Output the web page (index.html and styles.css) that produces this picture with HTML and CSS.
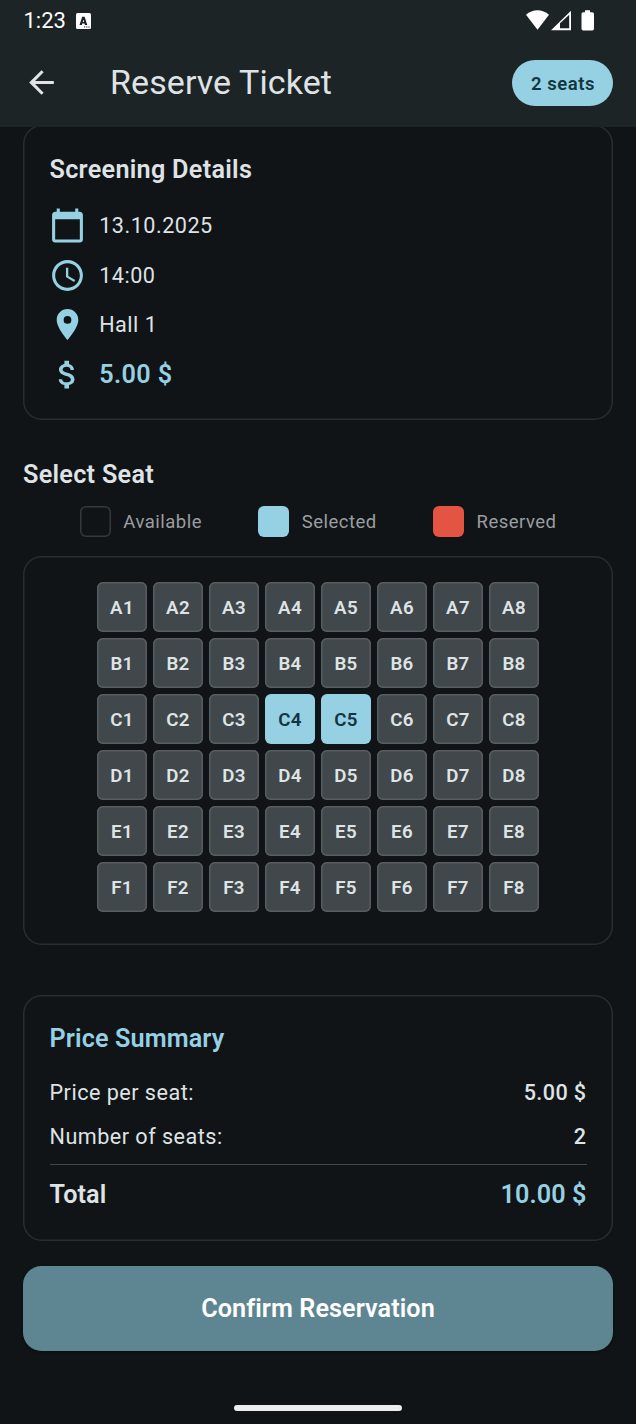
FILE: index.html
```html
<!DOCTYPE html>
<html lang="en">
<head>
<meta charset="utf-8">
<title>Reserve Ticket</title>
<link rel="stylesheet" href="styles.css">
</head>
<body>
<div class="screen">
  <header class="top">
    <div class="status">
      <span class="clock">1:23</span>
      <svg class="lang" width="15" height="16" viewBox="0 0 15 16"><rect width="15" height="16" rx="1.500" fill="#fff"/><path d="M3.500 12 6.200 3.800h2.400L11.300 12H8.900L8.500 10.600H6.200L5.800 12ZM6.700 8.900h1.400L7.400 6.400Z" fill="#1b2325" fill-rule="evenodd"/><path d="M8 14h1.200M10.200 14h1.200M12.400 14h1.200" stroke="#1b2325" stroke-width="1.200"/></svg>
      <svg class="signals" width="70" height="22" viewBox="0 0 70 22"><path d="M0 4.800C6.500-1.300 16.500-1.300 23 4.800L11.500 19.800Z" fill="#fff"/><path d="M25 20.200 45 .8V20.200Z" fill="#fff"/><path d="M34 18.200V13.200L43.200 4.700V18.200Z" fill="#1b2325"/><path d="M59 .2h5v2h2.200q1.800 0 1.800 1.800v14.700q0 1.800-1.800 1.800h-8.900q-1.800 0-1.800-1.800V4q0-1.800 1.800-1.800H59Z" fill="#fff"/></svg>
    </div>
    <div class="appbar">
      <svg class="back" width="37" height="37" viewBox="0 0 24 24"><path d="M20 11H7.830l5.590-5.590L12 4l-8 8 8 8 1.410-1.410L7.830 13H20v-2z" fill="#dfe3e5"/></svg>
      <h1 class="title">Reserve Ticket</h1>
      <span class="chip">2 seats</span>
    </div>
  </header>
  <main class="content">
    <section class="card details">
      <h2 class="heading">Screening Details</h2>
      <div class="info"><svg class="icon" viewBox="0 0 24 24"><path d="M20 3h-1V1h-2v2H7V1H5v2H4c-1.100 0-2 .9-2 2v16c0 1.100.9 2 2 2h16c1.100 0 2-.9 2-2V5c0-1.100-.9-2-2-2zm0 18H4V8h16v13z"/></svg><span>13.10.2025</span></div>
      <div class="info"><svg class="icon" viewBox="0 0 24 24"><path d="M11.990 2C6.470 2 2 6.480 2 12s4.470 10 9.990 10C17.520 22 22 17.520 22 12S17.520 2 11.990 2zM12 20c-4.420 0-8-3.580-8-8s3.580-8 8-8 8 3.580 8 8-3.580 8-8 8zm.5-13H11v6l5.250 3.150.75-1.230-4.500-2.670z"/></svg><span>14:00</span></div>
      <div class="info"><svg class="icon" viewBox="0 0 24 24"><path d="M12 2C8.130 2 5 5.130 5 9c0 5.250 7 13 7 13s7-7.750 7-13c0-3.870-3.130-7-7-7zm0 9.500a2.500 2.500 0 0 1 0-5 2.500 2.500 0 0 1 0 5z"/></svg><span>Hall 1</span></div>
      <div class="info"><svg class="icon" viewBox="0 0 24 24"><path d="M11.800 10.900c-2.270-.59-3-1.200-3-2.150 0-1.090 1.010-1.850 2.700-1.850 1.780 0 2.440.85 2.500 2.100h2.210c-.07-1.720-1.120-3.300-3.210-3.810V3h-3v2.160c-1.940.42-3.500 1.680-3.500 3.610 0 2.310 1.910 3.460 4.700 4.130 2.500.6 3 1.480 3 2.410 0 .69-.49 1.790-2.700 1.790-2.060 0-2.870-.92-2.980-2.100h-2.200c.12 2.190 1.760 3.420 3.680 3.830V21h3v-2.150c1.950-.37 3.500-1.500 3.500-3.550 0-2.840-2.430-3.810-4.700-4.400z"/></svg><span class="price">5.00 $</span></div>
    </section>

    <h2 class="heading select">Select Seat</h2>
    <div class="legend">
      <div class="key"><i class="swatch"></i><span>Available</span></div>
      <div class="key"><i class="swatch picked"></i><span>Selected</span></div>
      <div class="key"><i class="swatch taken"></i><span>Reserved</span></div>
    </div>

    <section class="card hall">
      <div class="seats">
        <b class="seat">A1</b><b class="seat">A2</b><b class="seat">A3</b><b class="seat">A4</b><b class="seat">A5</b><b class="seat">A6</b><b class="seat">A7</b><b class="seat">A8</b>
        <b class="seat">B1</b><b class="seat">B2</b><b class="seat">B3</b><b class="seat">B4</b><b class="seat">B5</b><b class="seat">B6</b><b class="seat">B7</b><b class="seat">B8</b>
        <b class="seat">C1</b><b class="seat">C2</b><b class="seat">C3</b><b class="seat on">C4</b><b class="seat on">C5</b><b class="seat">C6</b><b class="seat">C7</b><b class="seat">C8</b>
        <b class="seat">D1</b><b class="seat">D2</b><b class="seat">D3</b><b class="seat">D4</b><b class="seat">D5</b><b class="seat">D6</b><b class="seat">D7</b><b class="seat">D8</b>
        <b class="seat">E1</b><b class="seat">E2</b><b class="seat">E3</b><b class="seat">E4</b><b class="seat">E5</b><b class="seat">E6</b><b class="seat">E7</b><b class="seat">E8</b>
        <b class="seat">F1</b><b class="seat">F2</b><b class="seat">F3</b><b class="seat">F4</b><b class="seat">F5</b><b class="seat">F6</b><b class="seat">F7</b><b class="seat">F8</b>
      </div>
    </section>

    <section class="card summary">
      <h2 class="heading accent">Price Summary</h2>
      <div class="line"><span>Price per seat:</span><span class="value">5.00 $</span></div>
      <div class="line"><span>Number of seats:</span><span class="value">2</span></div>
      <div class="line total"><span>Total</span><span class="accent">10.00 $</span></div>
    </section>

    <button class="confirm">Confirm Reservation</button>
  </main>
  <div class="gesture"></div>
</div>
</body>
</html>
```
FILE: styles.css
```css
* { box-sizing: border-box; }
body {
  margin: 0;
  background: #101416;
  color: #dfe3e5;
  font-family: Roboto, "Liberation Sans", sans-serif;
}
h1, h2 { margin: 0; }
.screen { width: 636px; height: 1424px; display: flex; flex-direction: column; overflow: hidden; }
.top { height: 127px; flex: none; background: #1c2426; position: relative; z-index: 1; }
.status { height: 40px; display: flex; align-items: center; padding: 1px 40px 0 23.5px; color: #fff; }
.clock { font-size: 22px; width: 42px; white-space: nowrap; }
.lang { margin-left: 10.5px; }
.signals { margin-left: auto; }
.appbar { height: 86px; display: flex; align-items: center; padding: 0 23px; }
.back { margin-top: -1px; }
.title { font-size: 34px; font-weight: 400; line-height: 44px; letter-spacing: .08px; margin: -2px 0 0 50px; }
.chip {
  margin-left: auto; width: 101px; height: 46px; border-radius: 23px;
  background: #96d0e3; color: #123641;
  display: flex; align-items: center; justify-content: center;
  font-size: 18.5px; font-weight: 600; letter-spacing: .55px; padding: 2px 0 0 1px;
}
.content { padding: 0 23px; display: flex; flex-direction: column; flex: none; }
.card { box-shadow: inset 0 0 0 1.5px #292d30; border-radius: 18.5px; padding: 26px 26.5px; }
.heading { font-size: 25.2px; font-weight: 600; line-height: 37px; letter-spacing: .29px; }
.heading.accent { letter-spacing: .13px; }
.accent { color: #96d0e3; }
.details { height: 295px; margin-top: -2px; }
.info { display: flex; align-items: center; gap: 13px; height: 37px; margin: 12.7px 0 0 -.3px; font-size: 21.6px; letter-spacing: .5px; }
.details .heading + .info { margin-top: 19.1px; }
.icon { width: 37px; height: 37px; fill: #96d0e3; }
.price { font-size: 25.2px; font-weight: 600; letter-spacing: .38px; color: #96d0e3; }
.select { margin-top: 36px; }
.legend { display: flex; justify-content: space-evenly; margin-top: 13px; height: 31px; padding-left: .5px; }
.key { display: flex; align-items: center; gap: 12.4px; font-size: 18.5px; letter-spacing: .48px; color: #9b9ea0; }
.swatch { width: 31px; height: 31px; border-radius: 6px; box-shadow: inset 0 0 0 1.5px #34393c; }
.picked { background: #96d0e3; box-shadow: none; }
.taken { background: #e45443; box-shadow: none; }
.hall { margin-top: 19px; height: 389px; }
.seats { display: grid; grid-template-columns: repeat(8, 50px); grid-auto-rows: 50px; gap: 6.1px 6px; justify-content: center; }
.seat {
  box-shadow: inset 0 0 0 1.5px #575d60; border-radius: 6px; background: #40484b;
  display: flex; align-items: center; justify-content: center; padding-top: 1.5px;
  font-size: 18.7px; font-weight: 600; letter-spacing: .35px;
}
.seat.on { background: #96d0e3; box-shadow: none; color: #123641; }
.summary { margin-top: 50px; height: 246px; padding-top: 25px; }
.line { display: flex; justify-content: space-between; align-items: center; height: 31px; font-size: 21.6px; letter-spacing: .48px; }
.summary .heading + .line { margin-top: 20px; }
.line + .line { margin-top: 13px; }
.value { font-weight: 500; letter-spacing: .39px; }
.line.total { margin-top: 12px; padding-top: 14px; height: 45px; border-top: 1px solid #40484b; font-size: 25.2px; font-weight: 600; letter-spacing: .08px; }
.confirm {
  margin-top: 25px; height: 85px; border: 0; border-radius: 18.5px; background: #5e8692; color: #fff;
  font: 600 25.2px Roboto, "Liberation Sans", sans-serif; letter-spacing: .08px; padding-bottom: 2px; box-shadow: 0 1px 3px #0006;
}
.gesture { width: 168px; height: 6px; border-radius: 3px; background: #ededed; margin: auto auto 13.5px; flex: none; }
```
